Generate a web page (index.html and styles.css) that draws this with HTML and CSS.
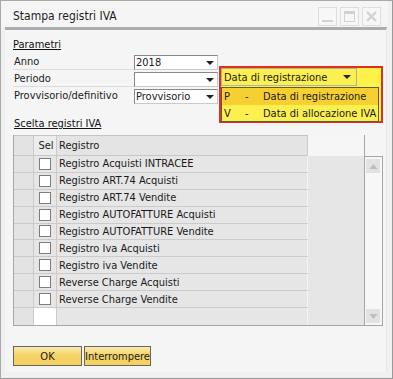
FILE: index.html
```html
<!DOCTYPE html>
<html lang="it">
<head>
<meta charset="utf-8">
<title>Stampa registri IVA</title>
<link rel="stylesheet" href="styles.css">
</head>
<body>
<div class="window">
  <div class="titlebar">
    <span class="title">Stampa registri IVA</span>
    <div class="winbtns">
      <span class="winbtn"><svg width="17" height="17" viewBox="0 0 17 17"><rect x="3" y="12" width="11" height="2" fill="#d2d2d2"/></svg></span>
      <span class="winbtn"><svg width="17" height="17" viewBox="0 0 17 17"><rect x="3.5" y="3.5" width="10" height="10" fill="none" stroke="#d2d2d2"/><rect x="3" y="3" width="11" height="3" fill="#d2d2d2"/></svg></span>
      <span class="winbtn"><svg width="17" height="17" viewBox="0 0 17 17"><path d="M4 4 L13 13 M13 4 L4 13" stroke="#d2d2d2" stroke-width="2.4"/></svg></span>
    </div>
  </div>
  <div class="panel">
    <div class="section-title">Parametri</div>
    <div class="form">
      <div class="form-row">
        <span class="label">Anno</span>
        <span class="combo"><span class="combo-text">2018</span><span class="arrow"></span></span>
      </div>
      <div class="form-row">
        <span class="label">Periodo</span>
        <span class="combo"><span class="combo-text"></span><span class="arrow"></span></span>
      </div>
      <div class="form-row last">
        <span class="label">Provvisorio/definitivo</span>
        <span class="combo"><span class="combo-text">Provvisorio</span><span class="arrow"></span></span>
      </div>
    </div>

    <div class="popup">
      <div class="popup-combo"><span class="combo-text">Data di registrazione</span><span class="arrow"></span></div>
      <div class="popup-list">
        <div class="popup-item selected"><span class="code">P</span><span class="dash">-</span><span>Data di registrazione</span></div>
        <div class="popup-item"><span class="code">V</span><span class="dash">-</span><span>Data di allocazione IVA</span></div>
      </div>
    </div>

    <div class="section-title second">Scelta registri IVA</div>
    <div class="table">
      <div class="grid">
        <div class="cols">
          <div class="hdr-row">
            <span class="rn"></span>
            <span class="sel hdr-sel">Sel</span>
            <span class="reg">Registro</span>
          </div>
          <div class="row"><span class="rn"></span><span class="sel"><span class="check"></span></span><span class="reg">Registro Acquisti INTRACEE</span></div>
          <div class="row"><span class="rn"></span><span class="sel"><span class="check"></span></span><span class="reg">Registro ART.74 Acquisti</span></div>
          <div class="row"><span class="rn"></span><span class="sel"><span class="check"></span></span><span class="reg">Registro ART.74 Vendite</span></div>
          <div class="row"><span class="rn"></span><span class="sel"><span class="check"></span></span><span class="reg">Registro AUTOFATTURE Acquisti</span></div>
          <div class="row"><span class="rn"></span><span class="sel"><span class="check"></span></span><span class="reg">Registro AUTOFATTURE Vendite</span></div>
          <div class="row"><span class="rn"></span><span class="sel"><span class="check"></span></span><span class="reg">Registro Iva Acquisti</span></div>
          <div class="row"><span class="rn"></span><span class="sel"><span class="check"></span></span><span class="reg">Registro iva Vendite</span></div>
          <div class="row"><span class="rn"></span><span class="sel"><span class="check"></span></span><span class="reg">Reverse Charge Acquisti</span></div>
          <div class="row"><span class="rn"></span><span class="sel"><span class="check"></span></span><span class="reg">Reverse Charge Vendite</span></div>
          <div class="row empty"><span class="rn"></span><span class="sel white"></span><span class="reg"></span></div>
        </div>
        <div class="extra">
          <div class="extra-hdr"></div>
          <div class="extra-body"></div>
        </div>
      </div>
      <div class="scrollbar">
        <span class="sb-btn"><svg width="13" height="13" viewBox="0 0 13 13"><path d="M2.5 9 L10.5 9 L6.5 4 Z" fill="#bdbdbd"/></svg></span>
        <span class="sb-btn"><svg width="13" height="13" viewBox="0 0 13 13"><path d="M2.5 4 L10.5 4 L6.5 9 Z" fill="#bdbdbd"/></svg></span>
      </div>
    </div>

    <div class="buttons">
      <span class="btn ok">OK</span>
      <span class="btn">Interrompere</span>
    </div>
  </div>
</div>
</body>
</html>
```
FILE: styles.css
```css
* { box-sizing: border-box; }
html, body {
  margin: 0;
  padding: 0;
  background: #ffffff;
}
body {
  font-family: "DejaVu Sans Condensed", "Liberation Sans", sans-serif;
  font-size: 11px;
  line-height: 13px;
  color: #1a1a1a;
}
.window {
  width: 393px;
  height: 379px;
  border: 1px solid #a9a9a9;
  border-right-color: #9a9a9a;
  border-bottom-color: #9a9a9a;
  background: #f0f0f0;
  display: flex;
  flex-direction: column;
}
.titlebar {
  height: 26px;
  display: flex;
  align-items: center;
  justify-content: space-between;
  padding: 0 7px 0 12px;
  background: #f5f5f5;
  margin: 0 4px 0 0;
}
.title {
  font-size: 12px;
  color: #1e1e1e;
  padding-top: 5px;
}
.winbtns {
  display: flex;
  gap: 3px;
  padding-top: 5px;
}
.winbtn {
  width: 19px;
  height: 19px;
  border: 1px solid #dedede;
  background: #f7f7f7;
  display: flex;
  align-items: center;
  justify-content: center;
}
.panel {
  flex: 1;
  margin: 0 5px 6px 4px;
  border-top: 3px solid #acacac;
  border-right: 1px solid #e6e6e6;
  background: #f5f5f5;
  padding: 8px 4px 0 8px;
  position: relative;
}
.section-title {
  text-decoration: underline;
  text-underline-offset: 1px;
  height: 14px;
  color: #111;
}
.section-title.second {
  margin-top: 13px;
  padding-left: 1px;
}
.form {
  margin-top: 1px;
  display: flex;
  flex-direction: column;
}
.form-row {
  display: flex;
  height: 17px;
}
.label {
  width: 121px;
  height: 17px;
  border-bottom: 1px solid #dcdcdc;
  display: flex;
  align-items: center;
  padding-left: 1px;
}
.form-row.last .label { border-bottom: none; }
.combo {
  width: 84px;
  height: 15px;
  margin-top: 2px;
  border: 1px solid #888;
  border-right-color: #c8c8c8;
  border-bottom-color: #c8c8c8;
  background: #fff;
  display: flex;
  align-items: center;
  justify-content: space-between;
  padding: 0 3px 0 1px;
}
.arrow {
  width: 0;
  height: 0;
  border-left: 4px solid transparent;
  border-right: 4px solid transparent;
  border-top: 4px solid #222;
}
.popup {
  position: absolute;
  left: 214px;
  top: 36px;
  width: 164px;
  height: 57px;
  border: 2px solid #e2301f;
  background: #fcf24a;
  padding: 0 0 0 0;
}
.popup-combo {
  width: 136px;
  height: 18px;
  border: 1px solid #b4b09a;
  display: flex;
  align-items: center;
  justify-content: space-between;
  padding: 0 5px 0 2px;
  background: #fcf04f;
}
.popup-combo .arrow { border-top-color: #222; }
.popup-list {
  margin-top: 1px;
  width: 158px;
  height: 35px;
  border: 1px solid #5a5a4a;
  background: #fcf04f;
}
.popup-item {
  display: flex;
  align-items: center;
  height: 16px;
  padding-left: 2px;
}
.popup-item.selected {
  background: #f6d033;
  height: 17px;
}
.popup-item .code { width: 21px; }
.popup-item .dash { width: 18px; }
.table {
  margin-top: 4px;
  display: flex;
  width: 370px;
}
.grid {
  width: 352px;
  height: 191px;
  display: flex;
  border-left: 1px solid #a6a6a6;
  border-right: 1px solid #a6a6a6;
  border-bottom: 1px solid #a6a6a6;
}
.cols {
  width: 294px;
  display: flex;
  flex-direction: column;
}
.hdr-row {
  display: flex;
  height: 21px;
  border-top: 1px solid #c4c4c4;
  border-bottom: 1px solid #c8c8c8;
  background: #e4e4e4;
}
.hdr-row span { display: flex; align-items: center; }
.rn {
  width: 20px;
  border-right: 1px solid #cacaca;
  background: #e3e3e3;
}
.sel {
  width: 23px;
  border-right: 1px solid #cacaca;
  display: flex;
  align-items: center;
  justify-content: center;
  background: #e6e6e6;
}
.hdr-sel {
  background: #ececec;
  justify-content: center;
  padding-left: 2px;
}
.reg {
  width: 251px;
  border-right: 1px solid #f4f4f4;
  display: flex;
  align-items: center;
  padding-left: 2px;
  background: #e6e6e6;
  white-space: nowrap;
}
.hdr-row .reg { background: #e4e4e4; border-right-color: #cacaca; }
.row {
  display: flex;
  height: 17px;
  border-bottom: 1px solid #cbcbcb;
}
.row.empty { border-bottom: none; }
.sel.white { background: #fff; }
.check {
  width: 12px;
  height: 12px;
  border: 1px solid #7d7d7d;
  background: #fff;
}
.extra {
  flex: 1;
  display: flex;
  flex-direction: column;
}
.extra-hdr {
  height: 21px;
  background: #f6f6f6;
}
.extra-body {
  flex: 1;
  background: #e6e6e6;
}
.scrollbar {
  width: 18px;
  height: 170px;
  margin-top: 21px;
  margin-left: 0;
  border: 1px solid #a6a6a6;
  border-left: none;
  background: #f7f7f7;
  display: flex;
  flex-direction: column;
  justify-content: space-between;
  padding: 2px 1px 2px 1px;
}
.sb-btn {
  width: 14px;
  height: 14px;
  background: #e2e2e2;
  display: flex;
  align-items: center;
  justify-content: center;
}
.buttons {
  display: flex;
  gap: 2px;
  margin-top: 20px;
}
.btn {
  height: 20px;
  border: 1px solid #666;
  background: linear-gradient(#fbeab0, #f5d466 45%, #f5d05e);
  display: flex;
  align-items: center;
  justify-content: center;
  color: #1a1a1a;
  width: 67px;
}
.btn.ok { width: 69px; }
```
